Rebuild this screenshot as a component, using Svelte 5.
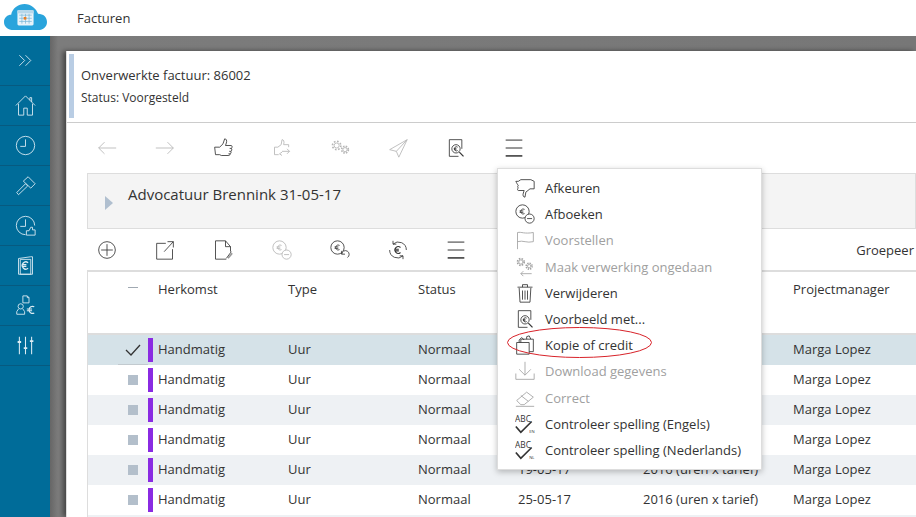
<script>
	const navIcons = ['chevrons', 'home', 'clock', 'hammer', 'clockthumb', 'book', 'person', 'sliders'];

	const topTools = [
		{ icon: 'left', dim: true },
		{ icon: 'right', dim: true },
		{ icon: 'thumb' },
		{ icon: 'thumbswap', dim: true },
		{ icon: 'gears', dim: true },
		{ icon: 'send', dim: true },
		{ icon: 'preview' },
		{ icon: 'burger' }
	];

	const subTools = [
		{ icon: 'plus' },
		{ icon: 'open' },
		{ icon: 'edit' },
		{ icon: 'coinminus', dim: true },
		{ icon: 'coinback' },
		{ icon: 'coincycle' },
		{ icon: 'burger' }
	];

	const menu = [
		{ label: 'Afkeuren', icon: 'thumbdown' },
		{ label: 'Afboeken', icon: 'coinminus' },
		{ label: 'Voorstellen', icon: 'flag', dim: true },
		{ label: 'Maak verwerking ongedaan', icon: 'gearsundo', dim: true },
		{ label: 'Verwijderen', icon: 'trash' },
		{ label: 'Voorbeeld met...', icon: 'preview' },
		{ label: 'Kopie of credit', icon: 'copy' },
		{ label: 'Download gegevens', icon: 'download', dim: true },
		{ label: 'Correct', icon: 'eraser', dim: true },
		{ label: 'Controleer spelling (Engels)', icon: 'abc', tag: 'EN' },
		{ label: 'Controleer spelling (Nederlands)', icon: 'abc', tag: 'NL' }
	];

	const rows = [
		{ date: '', period: '', selected: true },
		{ date: '', period: '' },
		{ date: '', period: '' },
		{ date: '', period: '' },
		{ date: '19-05-17', period: '2016 (uren x tarief)' },
		{ date: '25-05-17', period: '2016 (uren x tarief)' }
	];
</script>

{#snippet icon(name, tag)}
	<svg class="ico" viewBox="0 0 24 24" fill="none" stroke="currentColor" stroke-width="1">
		{#if name === 'left'}
			<path d="M23 12H2M9 5l-7 7 7 7" />
		{:else if name === 'right'}
			<path d="M1 12h21M15 5l7 7-7 7" />
		{:else if name === 'thumb'}
			<path d="M2 11h6l4-4 2-6c2 0 3 2 2 5l-1 3h7c1 0 1.500 3 0 3.500 1 1 .5 3-.5 3.500.5 1 0 3-1 3 0 1-.5 2-1.500 2H10l-2-1H3z" />
			<path d="M20 12.500h2M19.500 16h2M18.500 19h2" />
		{:else if name === 'thumbswap'}
			<path d="M3 11h4l4-3 1-6c2 0 3 2 2 6h6v3M3 11v9h5M12 16h9M18 13l3 3-3 3M12 21l-3-2 3-2" />
		{:else if name === 'gears'}
			<circle cx="8" cy="9" r="3" />
			<circle cx="8" cy="9" r="5" stroke-dasharray="2 1.900" stroke-width="2" />
			<circle cx="18" cy="14" r="2.500" />
			<circle cx="18" cy="14" r="4" stroke-dasharray="1.800 1.400" stroke-width="2" />
		{:else if name === 'gearsundo'}
			<circle cx="7" cy="6" r="2.500" />
			<circle cx="7" cy="6" r="4" stroke-dasharray="1.800 1.400" stroke-width="2" />
			<circle cx="17" cy="11" r="2" />
			<circle cx="17" cy="11" r="3.500" stroke-dasharray="1.600 1.150" stroke-width="2" />
			<path d="M20 20H7M10 17l-3 3 3 3" />
		{:else if name === 'send'}
			<path d="M23 2L2 14l8 2 3 7zM23 2L10 16" />
		{:else if name === 'preview'}
			<path d="M19 13V2H4v20h11" />
			<circle cx="12" cy="13" r="5" />
			<path d="M16 17l5 5" stroke-width="1.500" />
			<path d="M14 11a2.500 2.500 0 1 0 0 4M9.500 12.500h3M9.500 14h3" />
		{:else if name === 'burger'}
			<path d="M2 2.500h20M2 12h20" stroke-width="1.200" />
			<path d="M2 21.500h20" stroke-width="1.800" />
		{:else if name === 'plus'}
			<circle cx="12" cy="12" r="10" />
			<path d="M12 5v14M5 12h14" />
		{:else if name === 'open'}
			<path d="M13 4H2v19h19V11M11 14L22 2M15 2h7v7" />
		{:else if name === 'edit'}
			<path d="M3 1h12l6 7v6M3 1v22h13M15 1v7h6M16 22l6-8" />
			<path d="M18 22l5-6" stroke-width="2" opacity=".5" />
		{:else if name === 'coinminus'}
			<circle cx="9" cy="9" r="8" />
			<path d="M11.500 6.500a3 3 0 1 0 0 5M5.500 8.300h4.500M5.500 10h4.500" />
			<circle cx="17.500" cy="17.500" r="5.500" fill="#fff" />
			<path d="M14.500 17.500h6" />
		{:else if name === 'coinback'}
			<circle cx="9" cy="9" r="8" />
			<path d="M11.500 6.500a3 3 0 1 0 0 5M5.500 8.300h4.500M5.500 10h4.500" />
			<path d="M14 17a4.500 4.500 0 1 1 7 4M14 13v4h4" fill="#fff" />
		{:else if name === 'coincycle'}
			<path d="M6 5a9.500 9.500 0 0 1 16 7M18 19A9.500 9.500 0 0 1 2 12M6 1v4h4M18 23v-4h-4" />
			<path d="M15 9a4 4 0 1 0 0 6M8 11h5M8 13h5" stroke-width="1.300" />
		{:else if name === 'thumbdown'}
			<path d="M1 4h3l3-2h12l4 2v9h-5l-5 4-1 6c-2 0-3-2-2-5l1-3H4c-1 0-1.500-2 0-3-1-1-1-3 0-3-1-1-2-3-3-5z" />
		{:else if name === 'flag'}
			<path d="M3 23V3c5-1 8 2 19 0v11c-8 2-12-2-19 0" />
		{:else if name === 'trash'}
			<path d="M5 6l1 17h12l1-17M3 5h18M9 5V2h6v3M9 9v11M12 9v11M15 9v11" />
		{:else if name === 'copy'}
			<path d="M2 9h15v14H2zM7 9V5h15v15h-5M5 9V6l3-3 3 3M14 5V2l3-1 2 4" />
		{:else if name === 'download'}
			<path d="M12 1v16M5 10l7 7 7-7M1 15v7h22v-7" />
		{:else if name === 'eraser'}
			<path d="M2 15L14 5l8 6-11 9H7zM7 9l9 7M1 22h22" />
		{:else if name === 'abc'}
			<text x="0" y="9" class="abc">ABC</text>
			<path d="M1 15l6 7L20 9" stroke-width="2" />
			{#if tag}<text x="17" y="23" class="abctag">{tag}</text>{/if}
		{/if}
	</svg>
{/snippet}

{#snippet navIcon(name)}
	<svg class="navico" viewBox="0 0 24 24" fill="none" stroke="currentColor" stroke-width="1">
		{#if name === 'chevrons'}
			<path d="M5 6l6 6-6 6M12 6l6 6-6 6" />
		{:else if name === 'home'}
			<path d="M1 12L12 1l11 11M4 10v13h6v-8h4v8h6V10M17 6V3h2v5" />
		{:else if name === 'clock'}
			<circle cx="12" cy="12" r="10.500" />
			<path d="M12 5v8H6" />
		{:else if name === 'hammer'}
			<path d="M2 20l10-10 2.500 2.500L4 22.500zM9.500 7L15 2l8 8-5 5z" />
		{:else if name === 'clockthumb'}
			<path d="M12 22.500A10.500 10.500 0 1 1 22.500 12" />
			<path d="M12 5v8H6" />
			<path d="M13 23v-5h3l2-4h2v3h3v6z" />
		{:else if name === 'book'}
			<path d="M4 4l14-2h2v20H4z" />
			<path d="M6 5h12v17H6z" />
			<path d="M15 9a4 4 0 1 0 0 6M8 11h5M8 13h5" stroke-width="1.500" />
		{:else if name === 'person'}
			<path d="M9 1h5l2 2v6H9zM14 1v2h2" />
			<circle cx="6.500" cy="13" r="3" />
			<path d="M4 16l-2 3v3h9v-3l-2-3" />
			<path d="M22 13.500a4 4 0 1 0 0 7M13.500 16h6M13.500 18h6" stroke-width="1.300" />
		{:else if name === 'sliders'}
			<path d="M5 2v20M12 2v20M19 2v20" stroke-width="1.200" />
			<path d="M3 8h4M10 15h4M17 7h4" stroke-width="2.200" />
		{/if}
	</svg>
{/snippet}

<div class="app">
	<header class="topbar">
		<svg class="logo" viewBox="0 0 48 30">
			<path d="M11 30C4 30 0 26 0 21c0-5 4-8 8-8 1-7 8-12 15-12 7 0 13 5 15 11 6 0 10 4 10 9 0 5-4 9-10 9z" fill="#2aa4dc" />
			<rect x="15" y="8" width="18" height="17" rx="1.500" fill="#e8f3fa" />
			<rect x="15" y="8" width="18" height="3.500" fill="#b7d7ea" />
			<path d="M17 13.500h14M17 17h14M17 20.500h14M20 12v11M24 12v11M28 12v11" stroke="#7ab6d8" stroke-width=".8" />
			<rect x="22" y="15.500" width="3" height="3" fill="#ea7d22" />
		</svg>
		<span class="title">Facturen</span>
	</header>

	<div class="body">
		<nav class="sidebar">
			{#each navIcons as n, i}
				<div class="navitem" class:first={i === 0}>{@render navIcon(n)}</div>
			{/each}
		</nav>

		<main class="backdrop">
			<section class="sheet">
				<div class="notice">
					<div class="accent"></div>
					<div class="notice-text">
						<div class="notice-title">Onverwerkte factuur: 86002</div>
						<div class="notice-status">Status: Voorgesteld</div>
					</div>
				</div>

				<div class="toolbar top">
					{#each topTools as t}
						<span class="tool" class:dim={t.dim}>{@render icon(t.icon)}</span>
					{/each}
				</div>

				<div class="panel">
					<span class="arrow"></span>
					<span class="panel-title">Advocatuur Brennink 31-05-17</span>
				</div>

				<div class="toolbar sub">
					{#each subTools as t}
						<span class="tool" class:dim={t.dim}>{@render icon(t.icon)}</span>
					{/each}
					<span class="group">Groepeer</span>
				</div>

				<div class="table">
					<div class="row head">
						<span class="c-mark"><i class="dash"></i></span>
						<span class="c-bar"></span>
						<span class="c-origin">Herkomst</span>
						<span class="c-type">Type</span>
						<span class="c-status">Status</span>
						<span class="c-date"></span>
						<span class="c-period"></span>
						<span class="c-pm">Projectmanager</span>
					</div>
					{#each rows as r, i}
						<div class="row" class:selected={r.selected} class:alt={!r.selected && i % 2 === 0}>
							<span class="c-mark">
								{#if r.selected}
									<svg class="check" viewBox="0 0 16 12" fill="none" stroke="currentColor" stroke-width="1.300"><path d="M1 6l5 5L15 1" /></svg>
								{:else}
									<i class="square"></i>
								{/if}
							</span>
							<span class="c-bar"><i class="bar"></i></span>
							<span class="c-origin cell">Handmatig</span>
							<span class="c-type cell">Uur</span>
							<span class="c-status cell">Normaal</span>
							<span class="c-date cell">{r.date}</span>
							<span class="c-period cell">{r.period}</span>
							<span class="c-pm cell">Marga Lopez</span>
						</div>
					{/each}
					<div class="row alt"></div>
				</div>

				<div class="menu">
					{#each menu as m}
						<div class="menu-item" class:dim={m.dim}>
							{@render icon(m.icon, m.tag)}
							<span>{m.label}</span>
						</div>
					{/each}
					<svg class="ring" viewBox="0 0 145 31" fill="none">
						<ellipse cx="72.500" cy="15.500" rx="72" ry="15" stroke="#d8232a" stroke-width="1" />
					</svg>
				</div>
			</section>
		</main>
	</div>
</div>

<style>
	:global(body) {
		margin: 0;
		overflow: hidden;
	}

	.app {
		width: 916px;
		height: 517px;
		display: flex;
		flex-direction: column;
		overflow: hidden;
		font-family: 'Open Sans', sans-serif;
		font-size: 13px;
		color: #333;
		background: #fff;
	}

	.topbar {
		height: 36px;
		flex: none;
		display: flex;
		align-items: center;
		background: #fff;
	}

	.logo {
		width: 43px;
		height: 27px;
		margin: -4px 0 0 4px;
	}

	.title {
		margin-left: 30px;
		font-size: 13px;
		color: #333;
	}

	.body {
		flex: 1;
		display: flex;
		min-height: 0;
	}

	.sidebar {
		width: 50px;
		flex: none;
		background: #006c99;
		color: #dcecf3;
	}

	.navitem {
		height: 39px;
		display: flex;
		align-items: center;
		justify-content: center;
		border-bottom: 1px solid #075a80;
	}

	.navitem.first {
		height: 49px;
	}

	.navico {
		width: 21px;
		height: 21px;
	}

	.backdrop {
		flex: 1;
		min-width: 0;
		background: linear-gradient(90deg, #666, #7c7c7c 8px, #777);
		padding: 15px 0 0 16px;
	}

	.sheet {
		position: relative;
		height: 100%;
		background: #fff;
		border-left: 1px solid #ddd;
		padding-left: 20px;
		box-shadow: -3px 0 5px rgba(0, 0, 0, 0.45);
	}

	.notice {
		display: flex;
		height: 72px;
		margin-left: -20px;
		padding: 3px 0 0 2px;
		border-bottom: 1px solid #ccc;
		box-sizing: border-box;
	}

	.accent {
		width: 5px;
		height: 64px;
		background: #b9cde4;
	}

	.notice-text {
		padding: 12px 0 0 7px;
	}

	.notice-title {
		font-size: 13px;
		line-height: 18px;
	}

	.notice-status {
		margin-top: 5px;
		font-size: 12px;
		line-height: 17px;
	}

	.toolbar {
		display: flex;
		align-items: center;
		color: #333;
	}

	.toolbar.top {
		height: 50px;
		margin-left: -9px;
	}

	.toolbar.sub {
		height: 41px;
		margin-left: -9px;
	}

	.tool {
		width: 58.200px;
		display: flex;
		justify-content: center;
		flex: none;
	}

	.dim {
		color: #b5b5b5;
	}

	.ico {
		width: 20px;
		height: 20px;
		flex: none;
	}

	.abc {
		font-size: 10px;
		font-family: 'Open Sans', sans-serif;
		fill: currentColor;
		stroke: none;
	}

	.abctag {
		font-size: 5px;
		font-family: 'Open Sans', sans-serif;
		fill: currentColor;
		stroke: none;
	}

	.group {
		margin-left: auto;
		padding-right: 2px;
		white-space: nowrap;
	}

	.panel {
		height: 56px;
		box-sizing: border-box;
		display: flex;
		background: #f4f4f4;
		border: 1px solid #ddd;
		padding: 10px 0 0 17px;
	}

	.arrow {
		width: 0;
		height: 0;
		margin-top: 12px;
		border-left: 8px solid #b0bfcf;
		border-top: 7px solid transparent;
		border-bottom: 7px solid transparent;
	}

	.panel-title {
		margin-left: 15px;
		font-size: 15px;
		line-height: 20px;
	}

	.table {
		border-left: 1px solid #ddd;
		border-top: 2px solid #ddd;
	}

	.row {
		display: flex;
		align-items: center;
		height: 30px;
		white-space: nowrap;
	}

	.row.head {
		height: 63px;
		align-items: flex-start;
		padding-top: 8px;
		box-sizing: border-box;
		border-bottom: 2px solid #ddd;
	}

	.row.selected {
		background: linear-gradient(#c2cacf, #c2cacf) 30px 100% / 30px 1px no-repeat, #d5e2e8;
	}

	.row.alt {
		background: #eef1f4;
	}

	.row span {
		flex: none;
	}

	.cell {
		margin-bottom: 2px;
	}

	.c-mark {
		width: 60px;
		display: flex;
		justify-content: center;
		padding-left: 30px;
		box-sizing: border-box;
	}

	.c-bar {
		width: 10px;
		height: 100%;
		display: flex;
		align-items: center;
	}

	.c-origin {
		width: 130px;
	}

	.c-type {
		width: 130px;
	}

	.c-status {
		width: 100px;
	}

	.c-date {
		width: 125px;
	}

	.c-period {
		width: 150px;
	}

	.dash {
		width: 10px;
		height: 1px;
		margin-top: 7px;
		background: #a0a9b2;
	}

	.square {
		width: 10px;
		height: 10px;
		background: #b3bfcb;
	}

	.check {
		width: 16px;
		height: 12px;
		color: #333;
	}

	.bar {
		width: 5px;
		height: 24px;
		background: #8a2be2;
	}

	.menu {
		position: absolute;
		left: 430px;
		top: 117px;
		width: 265px;
		box-sizing: border-box;
		padding: 6px 0;
		background: #fff;
		border: 1px solid #ddd;
		box-shadow: 0 2px 6px rgba(0, 0, 0, 0.25);
	}

	.menu-item {
		height: 26.200px;
		display: flex;
		align-items: center;
		padding-left: 17px;
		gap: 10px;
		white-space: nowrap;
	}

	.menu-item.dim {
		color: #a0a0a0;
	}

	.ring {
		position: absolute;
		left: 9px;
		top: 158px;
		width: 145px;
		height: 31px;
	}
</style>
